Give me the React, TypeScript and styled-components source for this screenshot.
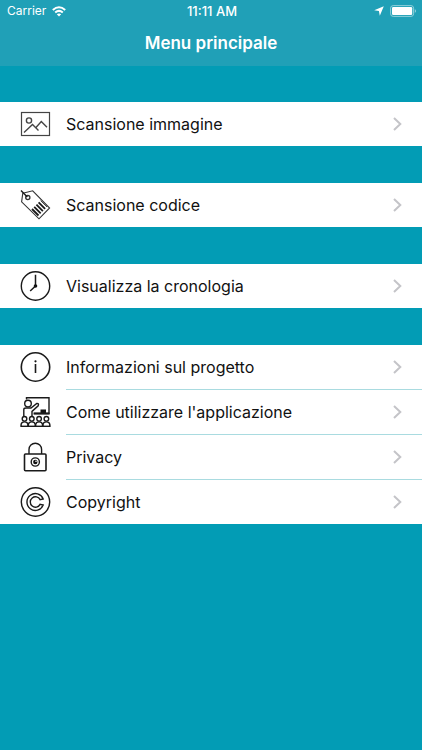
import React from "react";
import styled, { createGlobalStyle } from "styled-components";

const GlobalStyle = createGlobalStyle`
  *, *::before, *::after { box-sizing: border-box; }
  body {
    margin: 0;
    min-height: 100vh;
    background: #029cb5;
    color: #111;
    font-family: Inter, "Liberation Sans", sans-serif;
  }
`;

const Header = styled.header`
  display: flex;
  flex-direction: column;
  height: 66px;
  background: #20a0b7;
  color: #fff;
`;

const StatusBar = styled.div`
  display: grid;
  grid-template-columns: 1fr auto 1fr;
  align-items: center;
  height: 22px;
  padding: 0 5px 0 7px;
  font-size: 12px;
  line-height: 22px;
`;

const StatusGroup = styled.div<{ $end?: boolean }>`
  display: flex;
  align-items: center;
  justify-content: ${(p) => (p.$end ? "flex-end" : "flex-start")};
  gap: 6px;
`;

const Clock = styled.time`
  font-size: 13px;
  font-weight: 500;
`;

const Title = styled.h1`
  margin: 0;
  font-size: 17px;
  font-weight: 600;
  line-height: 42px;
  text-align: center;
`;

const Menu = styled.nav`
  display: flex;
  flex-direction: column;
  gap: 37px;
  padding: 36px 0;
`;

const Section = styled.ul`
  margin: 0;
  padding: 0;
  list-style: none;
  background: #fff;
`;

const Row = styled.a`
  display: flex;
  align-items: center;
  height: 44px;
  padding: 0 20px;
  gap: 15px;
  color: inherit;
  font-size: 16px;
  line-height: 20px;
  text-decoration: none;
`;

const Item = styled.li`
  & + &::before {
    content: "";
    display: block;
    height: 1px;
    margin-left: 66px;
    background: #a9dbe0;
  }
`;

const Label = styled.span`
  flex: 1;
`;

const Icon = styled.svg`
  flex: none;
  width: 31px;
  height: 32px;
  fill: none;
  stroke: #1a1a1a;
  stroke-width: 1.4;
`;

const Chevron = styled.svg`
  flex: none;
  width: 9px;
  height: 14px;
  fill: none;
  stroke: #c4c4c8;
  stroke-width: 2;
`;

const Glyph = styled.svg`
  flex: none;
`;

const ImageIcon = () => (
  <Icon viewBox="0 0 31 32" aria-hidden="true">
    <g stroke="#444">
      <rect x="1.5" y="4.5" width="28" height="23" strokeWidth="1.2" />
      <circle cx="9" cy="12.5" r="2.6" />
      <path d="M4 24.5 L12.5 16.5 L18.5 22.5 M15.5 20 L21.3 13.5 L27 19.3" />
    </g>
  </Icon>
);

const TagIcon = () => (
  <Icon viewBox="0 0 31 32" aria-hidden="true">
    <path d="M2.8 4.2 L12.7 1.8 L29.6 19 L19 29.8 L1.6 12.8 Z" stroke="#333" strokeWidth="1.1" />
    <circle cx="7.8" cy="8.6" r="2.1" stroke="#333" strokeWidth="1.3" />
    <path d="M1 1.5 L7.3 8" />
    <path d="M12 20 L18.5 26.5 M14.2 17.8 L20.7 24.3 M16.4 15.6 L22.9 22.1 M18.6 13.4 L25.1 19.9" strokeWidth="1.8" />
    <path d="M20.6 11.6 L27 18" strokeWidth=".8" />
  </Icon>
);

const ClockIcon = () => (
  <Icon viewBox="0 0 31 32" aria-hidden="true">
    <circle cx="15.5" cy="16" r="14.2" />
    <path d="M15.5 16 V4.8 M15.5 16 L10.2 21" strokeWidth="1.5" />
    <circle cx="15.5" cy="16" r="1.8" fill="#111" stroke="none" />
  </Icon>
);

const InfoIcon = () => (
  <Icon viewBox="0 0 31 32" aria-hidden="true">
    <circle cx="15.5" cy="16" r="14.2" strokeWidth="1.6" />
    <path d="M15.5 13 V22" strokeWidth="1.6" />
    <circle cx="15.5" cy="10.3" r="1.1" fill="#111" stroke="none" />
  </Icon>
);

const LessonIcon = () => (
  <Icon viewBox="0 0 31 32" aria-hidden="true">
    <path d="M6.5 3.5 V1.7 H29 V17.5 H14" />
    <circle cx="8" cy="7.6" r="3.3" />
    <path d="M3.8 20 V13.5 Q3.8 12 6 12 H11 L16.8 7.4 Q19.2 7.2 18.2 9.8 L12 15.4 V20" />
    <rect x="20.5" y="13.5" width="5.5" height="3.5" fill="#111" stroke="none" />
    <path d="M13.5 17.5 H29.5" strokeWidth="2" />
    {[4.5, 11.8, 19.1, 26.4].map((x) => (
      <g key={x}>
        <circle cx={x} cy="22.8" r="2.3" />
        <path d={`M${x - 3.4} 30.5 V28.4 Q${x - 3} 25.9 ${x} 25.9 Q${x + 3} 25.9 ${x + 3.4} 28.4 V30.5`} />
      </g>
    ))}
    <path d="M.5 30.3 H30.5" />
  </Icon>
);

const LockIcon = () => (
  <Icon viewBox="0 0 31 32" aria-hidden="true">
    <rect x="4.5" y="13" width="21.5" height="16.8" rx="1" strokeWidth="1.6" />
    <path d="M9 13 V8.5 A6.3 6.3 0 0 1 21.6 8.5 V13" />
    <circle cx="15.3" cy="21" r="4.1" />
    <circle cx="15.3" cy="21" r="2.2" fill="#111" stroke="none" />
    <circle cx="16" cy="20.2" r=".8" fill="#fff" stroke="none" />
  </Icon>
);

const CopyrightIcon = () => (
  <Icon viewBox="0 0 31 32" aria-hidden="true">
    <circle cx="15.5" cy="16" r="14.2" />
    <path d="M23.2 13 A8.4 8.4 0 1 0 23.2 19 L20.1 18.4 A5.2 5.2 0 1 1 20.1 13.6 Z" />
  </Icon>
);

const sections = [
  [{ id: "immagine", label: "Scansione immagine", Picture: ImageIcon }],
  [{ id: "codice", label: "Scansione codice", Picture: TagIcon }],
  [{ id: "cronologia", label: "Visualizza la cronologia", Picture: ClockIcon }],
  [
    { id: "progetto", label: "Informazioni sul progetto", Picture: InfoIcon },
    { id: "guida", label: "Come utilizzare l'applicazione", Picture: LessonIcon },
    { id: "privacy", label: "Privacy", Picture: LockIcon },
    { id: "copyright", label: "Copyright", Picture: CopyrightIcon },
  ],
];

export default function App() {
  return (
    <>
      <GlobalStyle />
      <Header>
        <StatusBar>
          <StatusGroup>
            <span>Carrier</span>
            <Glyph width="14" height="11" viewBox="0 0 14 11" fill="none" stroke="#fff" strokeWidth="2" aria-hidden="true">
              <path d="M.8 4 Q7 -1.6 13.2 4 M3.2 6.6 Q7 3.2 10.8 6.6" />
              <path d="M4.8 8.3 Q7 6.5 9.2 8.3 L7 10.6 Z" fill="#fff" stroke="none" />
            </Glyph>
          </StatusGroup>
          <Clock>11:11 AM</Clock>
          <StatusGroup $end>
            <Glyph width="10" height="10" viewBox="0 0 10 10" fill="#fff" aria-hidden="true">
              <path d="M9.8 .2 L5.8 9.8 L4.9 5.1 L.2 4.3 Z" />
            </Glyph>
            <Glyph width="27" height="12" viewBox="0 0 27 12" aria-hidden="true">
              <rect x=".6" y=".6" width="23" height="10.8" rx="2.6" fill="none" stroke="#8fd0db" />
              <rect x="2" y="2" width="20.2" height="8" rx="1.2" fill="#fff" />
              <path d="M24.8 4 Q27.4 6 24.8 8 Z" fill="#8fd0db" />
            </Glyph>
          </StatusGroup>
        </StatusBar>
        <Title>Menu principale</Title>
      </Header>
      <Menu aria-label="Menu principale">
        {sections.map((items) => (
          <Section key={items[0].id}>
            {items.map(({ id, label, Picture }) => (
              <Item key={id}>
                <Row href={`#${id}`}>
                  <Picture />
                  <Label>{label}</Label>
                  <Chevron viewBox="0 0 9 14" aria-hidden="true">
                    <path d="M1 1 L7.3 7 L1 13" />
                  </Chevron>
                </Row>
              </Item>
            ))}
          </Section>
        ))}
      </Menu>
    </>
  );
}
